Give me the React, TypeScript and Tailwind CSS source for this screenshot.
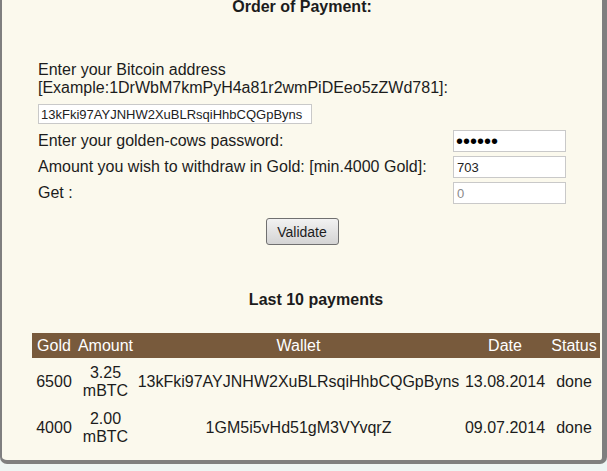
import React from "react";

const payments = [
  { gold: "6500", amount: "3.25", wallet: "13kFki97AYJNHW2XuBLRsqiHhbCQGpByns", date: "13.08.2014", status: "done" },
  { gold: "4000", amount: "2.00", wallet: "1GM5i5vHd51gM3VYvqrZ", date: "09.07.2014", status: "done" },
];

function Field({ label, children }: { label: string; children: React.ReactNode }) {
  return (
    <div className="flex h-[26px] items-center justify-between">
      <span>{label}</span>
      {children}
    </div>
  );
}

const inputCls =
  "h-[22px] w-[113px] border border-[#c9c9c9] bg-white px-[3px] text-[13px] text-[#222] outline-none";

export default function App() {
  return (
    <div className="h-[471px] w-[607px] overflow-hidden bg-[#eef5f3] font-['Liberation_Sans',Arial,sans-serif] text-[16px] leading-[18px] text-[#1c1c1c]">
      <div className="h-[466px] rounded-b-[7px] border-b-4 border-l-2 border-r-[5px] border-[#7f7f7f] bg-[#fbf9ed]">
        <h1 className="-mt-[2px] text-center text-[16px] font-bold leading-[18px]">Order of Payment:</h1>

        <div className="ml-[36px] mr-[36px] mt-[45px]">
          <p>Enter your Bitcoin address</p>
          <p>[Example:1DrWbM7kmPyH4a81r2wmPiDEeo5zZWd781]:</p>
          <input
            readOnly
            value="13kFki97AYJNHW2XuBLRsqiHhbCQGpByns"
            className="mt-[7px] block h-[20px] w-[274px] border border-[#c9c9c9] bg-white px-[2px] text-[13px] text-[#222] outline-none"
          />
          <div className="mt-[4px]">
            <Field label="Enter your golden-cows password:">
              <input
                readOnly
                type="password"
                value="xxxxxx"
                className="h-[22px] w-[113px] border border-[#c9c9c9] bg-white px-[2px] py-0 text-[20px] leading-none text-black outline-none"
              />
            </Field>
            <Field label="Amount you wish to withdraw in Gold: [min.4000 Gold]:">
              <input readOnly value="703" className={inputCls} />
            </Field>
            <Field label="Get :">
              <input readOnly placeholder="0" className={`${inputCls} placeholder:text-[#8a8a8a]`} />
            </Field>
          </div>
        </div>

        <div className="mt-[12px] flex justify-center">
          <button className="h-[27px] w-[73px] rounded-[3px] border border-[#707070] bg-gradient-to-b from-[#f2f2f2] to-[#d4d4d4] text-[14px] text-[#1c1c1c]">
            Validate
          </button>
        </div>

        <h2 className="ml-[30px] mt-[46px] w-[568px] text-center text-[16px] font-bold leading-[18px]">
          Last 10 payments
        </h2>

        <table className="ml-[30px] mt-[22px] w-[568px] table-fixed border-separate border-spacing-x-0 border-spacing-y-[2px]">
          <colgroup>
            <col className="w-[44px]" />
            <col className="w-[59px]" />
            <col className="w-[327px]" />
            <col className="w-[86px]" />
            <col className="w-[52px]" />
          </colgroup>
          <thead>
            <tr className="text-white">
              {["Gold", "Amount", "Wallet", "Date", "Status"].map((h) => (
                <th key={h} className="h-[25px] bg-[#785a3c] p-0 text-center font-normal">
                  {h}
                </th>
              ))}
            </tr>
          </thead>
          <tbody>
            {payments.map((p) => (
              <tr key={p.date} className="text-center">
                <td className="py-[4px]">{p.gold}</td>
                <td className="py-[4px]">
                  {p.amount}
                  <br />
                  mBTC
                </td>
                <td className="py-[4px]">{p.wallet}</td>
                <td className="py-[4px]">{p.date}</td>
                <td className="py-[4px]">{p.status}</td>
              </tr>
            ))}
          </tbody>
        </table>
      </div>
    </div>
  );
}
